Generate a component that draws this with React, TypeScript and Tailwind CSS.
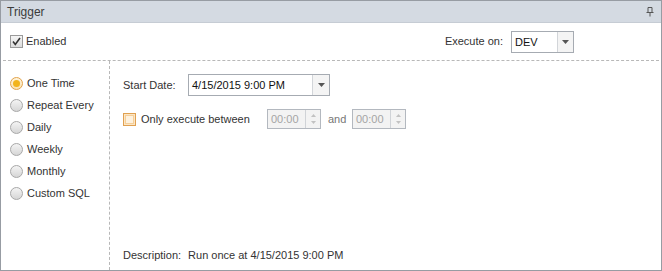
const Radio = ({ label, checked }: { label: string; checked?: boolean }) => (
  <div className="flex items-center h-[22px]">
    <span
      className={
        "w-[13px] h-[13px] rounded-full border flex items-center justify-center " +
        (checked
          ? "border-[#e2a24a] bg-gradient-to-b from-[#fff4dc] to-[#fbe2b0]"
          : "border-[#a8a8a8] bg-gradient-to-b from-[#f4f4f4] to-[#d6d6d6]")
      }
    >
      {checked && <span className="w-[7px] h-[7px] rounded-full bg-[#f2b41c]" />}
    </span>
    <span className="ml-[4px]">{label}</span>
  </div>
);

const Arrow = () => (
  <svg width="7" height="4" viewBox="0 0 7 4">
    <path d="M0 0h7L3.5 4z" fill="#555" />
  </svg>
);

const Spin = () => (
  <div className="flex h-[20px] w-[54px] border border-[#b3b8bf] bg-[#f3f3f3] text-[#a5a5a5]">
    <div className="flex-1 pl-[3px] leading-[18px]">00:00</div>
    <div className="w-[15px] border-l border-[#d0d3d7] flex flex-col items-center justify-center gap-[4px]">
      <svg width="5" height="3" viewBox="0 0 5 3"><path d="M0 3L2.5 0L5 3z" fill="#c2c2c2" /></svg>
      <svg width="5" height="3" viewBox="0 0 5 3"><path d="M0 0h5L2.5 3z" fill="#c2c2c2" /></svg>
    </div>
  </div>
);

export default function App() {
  return (
    <div
      className="w-[662px] h-[271px] border border-[#979ca3] bg-white flex flex-col text-[11px] text-[#333]"
      style={{ fontFamily: '"Liberation Sans", Arial, sans-serif' }}
    >
      <div className="h-[22px] bg-[#d4dae2] flex items-center justify-between pl-[6px] pr-[7px] border-b border-[#c6ccd4] text-[12px]">
        <span className="text-[#3c3c3c]">Trigger</span>
        <svg width="8" height="10" viewBox="0 0 8 10">
          <path d="M2 0.5h4v5H2zM0.5 5.5h7M4 5.5v4" stroke="#555" fill="none" />
        </svg>
      </div>
      <div className="h-[38px] flex items-center justify-between pl-[7px] pr-[85px] border-b border-dashed border-[#b8b8b8] mx-[2px]">
        <div className="flex items-center">
          <span className="w-[13px] h-[13px] border border-[#9a9a9a] bg-gradient-to-b from-[#f5f5f5] to-[#dcdcdc] flex items-center justify-center">
            <svg width="9" height="9" viewBox="0 0 9 9">
              <path d="M1 4.5l2.3 3L8 1" stroke="#333" strokeWidth="1.6" fill="none" />
            </svg>
          </span>
          <span className="ml-[3px]">Enabled</span>
        </div>
        <div className="flex items-center">
          <span className="mr-[8px]">Execute on:</span>
          <div className="flex h-[22px] w-[63px] border border-[#a6abb2] bg-white">
            <div className="flex-1 pl-[3px] leading-[20px] text-[#111]">DEV</div>
            <div className="w-[16px] border-l border-[#d2d5d9] bg-[#f4f4f4] flex items-center justify-center">
              <Arrow />
            </div>
          </div>
        </div>
      </div>
      <div className="flex-1 flex">
        <div className="w-[109px] border-r border-dashed border-[#b8b8b8] pl-[9px] pt-[11px] flex flex-col">
          <Radio label="One Time" checked />
          <Radio label="Repeat Every" />
          <Radio label="Daily" />
          <Radio label="Weekly" />
          <Radio label="Monthly" />
          <Radio label="Custom SQL" />
        </div>
        <div className="flex-1 flex flex-col pl-[13px] pt-[13px] pb-[7px]">
          <div className="flex items-center h-[22px]">
            <span className="w-[65px]">Start Date:</span>
            <div className="flex h-[22px] w-[142px] border border-[#a6abb2] bg-white">
              <div className="flex-1 pl-[3px] leading-[20px] text-[#111]">4/15/2015 9:00 PM</div>
              <div className="w-[17px] border-l border-[#d2d5d9] bg-[#f4f4f4] flex items-center justify-center">
                <Arrow />
              </div>
            </div>
          </div>
          <div className="flex items-center h-[20px] mt-[13px]">
            <span className="w-[13px] h-[13px] border border-[#e0a050] bg-[#fbe6c6] flex items-center justify-center">
              <span className="w-[9px] h-[9px] border border-[#f6cf98] bg-[#fdf1de]" />
            </span>
            <span className="ml-[5px] w-[126px]">Only execute between</span>
            <Spin />
            <span className="ml-[7px] w-[24px] text-[#777]">and</span>
            <Spin />
          </div>
          <div className="mt-auto">
            <span>Description:</span>
            <span className="ml-[7px]">Run once at 4/15/2015 9:00 PM</span>
          </div>
        </div>
      </div>
    </div>
  );
}
